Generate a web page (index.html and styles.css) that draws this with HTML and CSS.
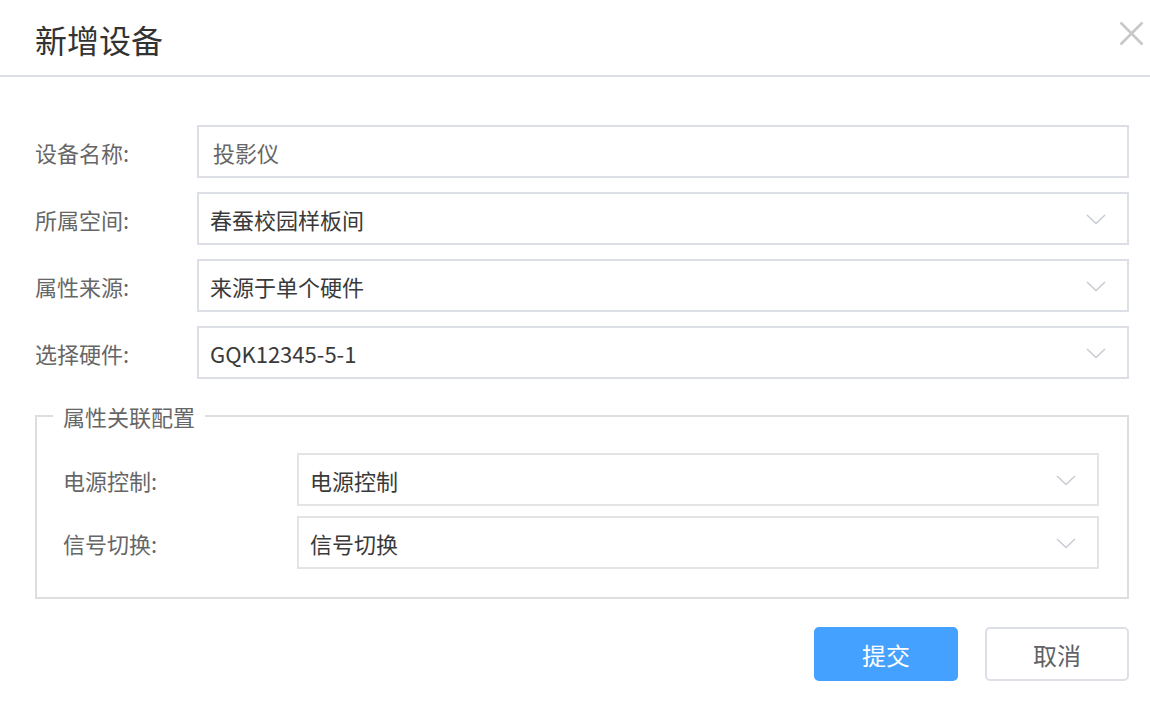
FILE: index.html
```html
<!DOCTYPE html>
<html lang="zh-CN">
<head>
    <meta charset="UTF-8">
    <meta name="viewport" content="width=device-width, initial-scale=1.0">
    <title>新增设备</title>
    <link rel="stylesheet" href="styles.css">
</head>
<body>
    <div class="dialog">
        <!-- Header -->
        <div class="dialog-header">
            <span class="dialog-title">新增设备</span>
            <svg class="close-icon" width="25" height="25" viewBox="0 0 25 25">
                <path d="M1.5 1.5 L23.5 23.5 M23.5 1.5 L1.5 23.5" stroke="#c8c8c8" stroke-width="2.6" fill="none"/>
            </svg>
        </div>

        <!-- Form -->
        <div class="dialog-body">
            <div class="form-row">
                <label class="form-label">设备名称:</label>
                <input class="form-input" type="text" value="投影仪">
            </div>

            <div class="form-row">
                <label class="form-label">所属空间:</label>
                <div class="form-select">
                    <span>春蚕校园样板间</span>
                    <svg class="arrow" width="20" height="11" viewBox="0 0 20 11"><polyline points="1,1 10,9.5 19,1" fill="none" stroke="#c8cbd3" stroke-width="1.5"/></svg>
                </div>
            </div>

            <div class="form-row">
                <label class="form-label">属性来源:</label>
                <div class="form-select">
                    <span>来源于单个硬件</span>
                    <svg class="arrow" width="20" height="11" viewBox="0 0 20 11"><polyline points="1,1 10,9.5 19,1" fill="none" stroke="#c8cbd3" stroke-width="1.5"/></svg>
                </div>
            </div>

            <div class="form-row">
                <label class="form-label">选择硬件:</label>
                <div class="form-select">
                    <span>GQK12345-5-1</span>
                    <svg class="arrow" width="20" height="11" viewBox="0 0 20 11"><polyline points="1,1 10,9.5 19,1" fill="none" stroke="#c8cbd3" stroke-width="1.5"/></svg>
                </div>
            </div>

            <fieldset class="group">
                <legend>属性关联配置</legend>

                <div class="form-row group-row">
                    <label class="form-label">电源控制:</label>
                    <div class="form-select">
                        <span>电源控制</span>
                        <svg class="arrow" width="20" height="11" viewBox="0 0 20 11"><polyline points="1,1 10,9.5 19,1" fill="none" stroke="#c8cbd3" stroke-width="1.5"/></svg>
                    </div>
                </div>

                <div class="form-row group-row">
                    <label class="form-label">信号切换:</label>
                    <div class="form-select">
                        <span>信号切换</span>
                        <svg class="arrow" width="20" height="11" viewBox="0 0 20 11"><polyline points="1,1 10,9.5 19,1" fill="none" stroke="#c8cbd3" stroke-width="1.5"/></svg>
                    </div>
                </div>
            </fieldset>

            <div class="actions">
                <button class="btn btn-primary">提交</button>
                <button class="btn">取消</button>
            </div>
        </div>
    </div>
</body>
</html>
```

FILE: styles.css
```css
/* Global styles */
* {
    box-sizing: border-box;
}

body {
    margin: 0;
    padding: 0;
    background: #ffffff;
    font-family: "Noto Sans CJK SC", "Noto Sans", sans-serif;
    color: #606266;
}

/* Header */
.dialog-header {
    height: 77px;
    display: flex;
    align-items: center;
    justify-content: space-between;
    padding: 0 6px 2px 35px;
    border-bottom: 2px solid #dcdfe6;
}

.dialog-title {
    font-size: 32px;
    line-height: 40px;
    color: #333333;
    margin-top: 4px;
}

.close-icon {
    margin-bottom: 6px;
    cursor: pointer;
}

/* Body */
.dialog-body {
    padding: 48px 21px 0 35px;
}

.form-row {
    display: flex;
    align-items: center;
    margin-bottom: 14px;
}

.form-label {
    width: 162px;
    flex-shrink: 0;
    font-size: 22px;
    color: #666666;
}

.form-input,
.form-select {
    flex: 1;
    height: 53px;
    border: 2px solid #dcdfe6;
    background: #fff;
    font-family: inherit;
    font-size: 22px;
}

.form-input {
    padding: 0 14px;
    color: #666666;
    outline: none;
}

.form-select {
    display: flex;
    align-items: center;
    justify-content: space-between;
    padding: 0 21px 0 11px;
    color: #3a3a3a;
}

.arrow {
    margin-top: 2px;
}

/* Attribute group */
.group {
    margin: 22px 0 0 0;
    padding: 22px 28px 18px 26px;
    border: 2px solid #dedede;
}

.group legend {
    font-size: 22px;
    line-height: 30px;
    padding: 0 10px;
    margin-left: -10px;
    color: #666666;
}

.group-row {
    margin-bottom: 10px;
}

.group-row .form-label {
    width: 234px;
}

.group-row .form-select {
    border-color: #e4e4e4;
}

/* Buttons */
.actions {
    display: flex;
    justify-content: flex-end;
    gap: 27px;
    margin-top: 28px;
}

.btn {
    width: 144px;
    height: 54px;
    border: 2px solid #dcdfe6;
    border-radius: 5px;
    background: #fff;
    color: #606266;
    font-family: inherit;
    font-size: 24px;
    cursor: pointer;
}

.btn-primary {
    background: #44a1ff;
    border-color: #44a1ff;
    color: #fff;
}
```
